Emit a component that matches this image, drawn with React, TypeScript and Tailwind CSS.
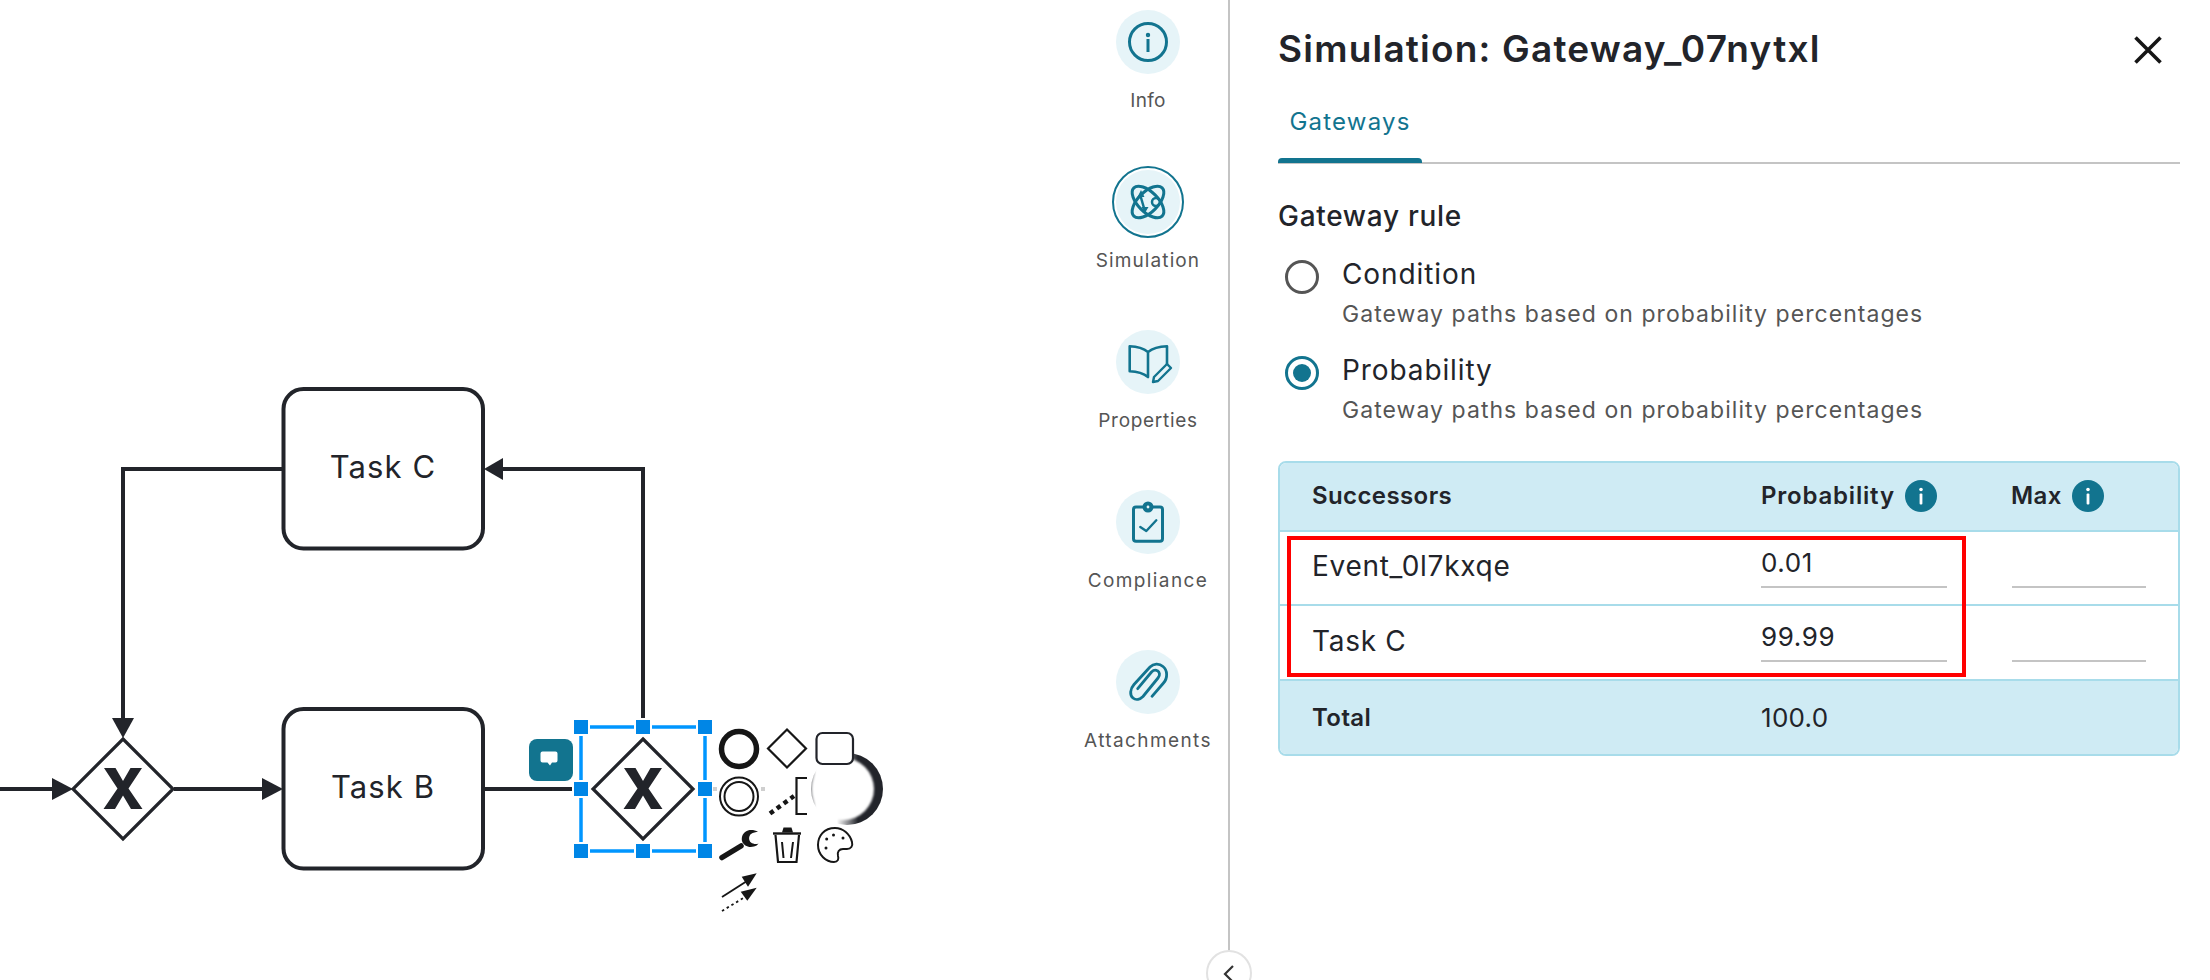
const TEAL = "#12748f";
const INK = "#22242a";

function InfoDot() {
  return (
    <svg width="32" height="32" viewBox="0 0 32 32">
      <circle cx="16" cy="16" r="16" fill={TEAL} />
      <circle cx="16" cy="9.5" r="1.8" fill="#fff" />
      <rect x="14.6" y="13.5" width="2.8" height="11" rx="1" fill="#fff" />
    </svg>
  );
}

function RailIcon({ name }: { name: string }) {
  if (name === "Info") {
    return (
      <g fill="none" stroke={TEAL} strokeWidth="3">
        <circle cx="32" cy="32" r="18.5" />
        <circle cx="32" cy="25" r="1" strokeWidth="2.4" />
        <path d="M32 29v13" />
      </g>
    );
  }
  if (name === "Simulation") {
    return (
      <g fill="none" stroke={TEAL} strokeWidth="3">
        <ellipse cx="32" cy="32" rx="20" ry="10" transform="rotate(45 32 32)" />
        <ellipse cx="32" cy="32" rx="20" ry="10" transform="rotate(-45 32 32)" />
        <circle cx="40" cy="32" r="4" strokeWidth="2.5" />
        <path d="M24.5 26l3.5 12" strokeWidth="2.5" />
        <path d="M25 20l-3.5 7h7z M29 43l3.5-6h-7z" fill={TEAL} stroke="none" />
      </g>
    );
  }
  if (name === "Properties") {
    return (
      <g fill="none" stroke={TEAL} strokeWidth="2.6" strokeLinecap="round" strokeLinejoin="round">
        <path d="M32 22C27 18 20 16.5 13.7 16.3V41.3C20 41.5 27 43 32 47V22C37 18 44 16.5 51 16.3V33.7" />
        <path d="M37 52l1-5 13-13 4 4-13 13z" strokeWidth="2.4" />
      </g>
    );
  }
  if (name === "Compliance") {
    return (
      <g fill="none" stroke={TEAL} strokeWidth="3" strokeLinejoin="round">
        <rect x="17.5" y="17" width="29" height="34.3" rx="2.5" />
        <circle cx="32" cy="17" r="4" fill={TEAL} />
        <circle cx="32" cy="17" r="1.4" fill="#e6f4f8" stroke="none" />
        <path d="M24.3 37l6 4 10-10.7" strokeWidth="2.4" strokeLinecap="round" />
      </g>
    );
  }
  return (
    <path
      d="M36 46.3L47.5 33C52 28 51.5 20 47 16.5C43 13 37.5 13.5 34 17L18 34.5C14 39 13.5 45 17 48C20 50.5 24 49.5 27 46.5L42 28C44.5 25 43.5 22 41.5 20.8C39.5 19.5 37.5 20 35.5 22L21.7 38.7"
      fill="none"
      stroke={TEAL}
      strokeWidth="2.8"
      strokeLinecap="round"
    />
  );
}

const RAIL = [
  { name: "Info", label: "mt-[14px] tracking-[0.3px]" },
  { name: "Simulation", label: "mt-[10px] tracking-[1.1px]" },
  { name: "Properties", label: "mt-[14px] tracking-[0.7px]" },
  { name: "Compliance", label: "mt-[14px] tracking-[1.4px]" },
  { name: "Attachments", label: "mt-[14px] tracking-[1.4px]" },
];

function Gateway({ cx }: { cx: number }) {
  return (
    <g>
      <path d={`M${cx} 739L${cx + 50} 789L${cx} 839L${cx - 50} 789Z`} fill="#fff" stroke={INK} strokeWidth="3.2" />
      <path
        d={`M${cx - 19} 768h11.5l7.5 13l7.5-13h11.5l-13.5 20.5l14 20.5h-11.5l-8-13.5l-8 13.5h-11.5l14-20.5z`}
        fill={INK}
      />
    </g>
  );
}

function Task({ y, label }: { y: number; label: string }) {
  return (
    <g>
      <rect x="283.5" y={y} width="199.5" height="159.5" rx="20" fill="#fff" stroke={INK} strokeWidth="4" />
      <text x="383" y={y + 89} textAnchor="middle" fontSize="31" letterSpacing="1.1" fill={INK} fontFamily="Inter, sans-serif">
        {label}
      </text>
    </g>
  );
}

function Handle({ x, y }: { x: number; y: number }) {
  return <rect x={x - 7} y={y - 7} width="14" height="14" fill="#0086e6" stroke="#fff" strokeWidth="4" paintOrder="stroke" />;
}

function Diagram() {
  return (
    <svg width="1060" height="980" viewBox="0 0 1060 980" className="block">
      <defs>
        <filter id="soft" x="-20%" y="-20%" width="140%" height="140%">
          <feGaussianBlur stdDeviation="1.2" />
        </filter>
        <linearGradient id="crescent" gradientUnits="userSpaceOnUse" x1="811" y1="0" x2="858" y2="0">
          <stop offset="0" stopColor={INK} stopOpacity="0.6" />
          <stop offset="0.12" stopColor={INK} stopOpacity="0" />
          <stop offset="0.55" stopColor={INK} stopOpacity="0" />
          <stop offset="1" stopColor={INK} stopOpacity="1" />
        </linearGradient>
      </defs>
      <g fill="none" stroke={INK} strokeWidth="4">
        <path d="M0 789H55" />
        <path d="M174 789H266" />
        <path d="M283 469H123V722" />
        <path d="M500 469H643V722" />
        <path d="M483 789H572" />
      </g>
      <Gateway cx={123} />
      <Gateway cx={643} />
      <g fill={INK}>
        <path d="M73 789L52 778V800Z" />
        <path d="M283 789L262 778V800Z" />
        <path d="M123 738L112 718H134Z" />
        <path d="M484 469L503 458V480Z" />
      </g>
      <Task y={389} label="Task C" />
      <Task y={709} label="Task B" />

      {/* selection */}
      <rect x="581" y="727" width="124" height="124" fill="none" stroke="#0096ff" strokeWidth="3.5" />
      {[581, 643, 705].map((x) =>
        [727, 789, 851].map((y) => (x === 643 && y === 789 ? null : <Handle key={`${x}-${y}`} x={x} y={y} />)),
      )}
      <rect x="713" y="787" width="4" height="4" fill="#cfcfcf" />
      <rect x="761" y="787" width="4" height="4" fill="#cfcfcf" />

      {/* comment badge */}
      <rect x="529" y="739" width="44" height="42" rx="8" fill={TEAL} />
      <path d="M542.5 751.5h13a2 2 0 0 1 2 2v7a2 2 0 0 1-2 2h-3.5l-2 3l-2.5-3h-5a2 2 0 0 1-2-2v-7a2 2 0 0 1 2-2z" fill="#fff" />

      {/* context pad */}
      <circle cx="847" cy="789" r="36" fill="url(#crescent)" />
      <circle cx="843" cy="789" r="31" fill="#fff" filter="url(#soft)" />
      <rect x="816.5" y="733" width="36.5" height="31" rx="6" fill="#fff" stroke={INK} strokeWidth="2.2" />
      <circle cx="739" cy="749" r="17.5" fill="none" stroke="#161616" strokeWidth="5.5" />
      <path d="M787 729.5L806 748.5L787 767.5L768 748.5Z" fill="none" stroke="#161616" strokeWidth="2.2" />
      <circle cx="739" cy="796.5" r="19" fill="none" stroke="#161616" strokeWidth="2" />
      <circle cx="739" cy="796.5" r="14.5" fill="none" stroke="#161616" strokeWidth="2" />
      <path d="M807 778H796.5V814H807" fill="none" stroke="#161616" strokeWidth="2.2" />
      <path d="M770 813.5L794 796" fill="none" stroke="#161616" strokeWidth="4.5" strokeDasharray="4.5 4" />
      <path d="M722 857.5L741 846" fill="none" stroke="#161616" strokeWidth="5.5" strokeLinecap="round" />
      <path
        d="M758 832C755 830 751 829.5 748 830.5C743 832 741 837 742 841C743.5 846 749 848 754 846.5C756 846 757.5 845 758.5 843.5C756 844.5 753 844 751 842.5C748.5 840.5 748.5 836 751 834C753 832.5 756 832 758 832Z"
        fill="#161616"
      />
      <path d="M782 832.5L783.5 827.5H791.5L793 832.5Z" fill="#161616" />
      <path d="M773 833.5H801" stroke="#161616" strokeWidth="2.4" />
      <path d="M775.5 835L778 862H796.5L799 835" fill="none" stroke="#161616" strokeWidth="2.2" />
      <path d="M782 842L783.5 858M793 842L791 858" stroke="#161616" strokeWidth="2" />
      <path
        d="M835 828C824 828 818 836 818 845C818 855 826 862 834 862C838 862 839 859 838 856C837 852 839 849 843 849L847 849C851 849 853 846 852 842C850 834 843 828 835 828Z"
        fill="#fff"
        stroke="#161616"
        strokeWidth="2"
      />
      <g fill="#161616">
        <circle cx="826.7" cy="839" r="1.5" />
        <circle cx="833.5" cy="835" r="1.5" />
        <circle cx="843" cy="838" r="1.5" />
        <circle cx="826" cy="848" r="1.5" />
      </g>
      <path d="M722 897L747 881" stroke="#161616" strokeWidth="1.8" />
      <path d="M756.7 873.3L741.7 876.7L748 886.7Z" fill="#161616" />
      <path d="M722 911L745 897" stroke="#161616" strokeWidth="1.8" strokeDasharray="2.5 3" />
      <path d="M756.7 887.7L740.7 891.7L747.3 900.7Z" fill="#161616" />
    </svg>
  );
}

function Cell({ value }: { value?: string }) {
  return (
    <input
      readOnly
      value={value ?? ""}
      className="self-start mt-[14px] h-[42px] w-full pb-[7px] border-b-2 border-[#c4c4c4] bg-transparent text-[26px] tracking-[0.6px] text-[#22242a] outline-none"
    />
  );
}

export default function App() {
  return (
    <div className="relative flex h-[980px] w-[2210px] overflow-hidden bg-white text-[#22242a] [font-family:Inter,sans-serif]">
      <div className="w-[1060px] shrink-0">
        <Diagram />
      </div>

      {/* icon rail */}
      <div className="flex w-[168px] shrink-0 flex-col items-center pl-[8px] pt-[10px]">
        {RAIL.map((item) => (
          <div key={item.name} className="flex h-[160px] w-full flex-col items-center">
            <div
              className={
                item.name === "Simulation"
                  ? "h-[72px] w-[72px] -mt-[4px] rounded-full border-2 border-[#12748f] p-[2px]"
                  : "h-[64px] w-[64px] rounded-full"
              }
            >
              <svg width="64" height="64" viewBox="0 0 64 64" className="rounded-full bg-[#e6f4f8]">
                <RailIcon name={item.name} />
              </svg>
            </div>
            <span className={`${item.label} whitespace-nowrap text-[19px] leading-[26px] text-[#555555]`}>{item.name}</span>
          </div>
        ))}
      </div>

      {/* panel */}
      <div className="flex-1 border-l-2 border-[#c4c4c4] pl-[48px] pr-[30px]">
        <div className="flex h-[100px] items-center justify-between pr-[18px]">
          <h1 className="-mt-[2px] text-[37px] font-semibold tracking-[1.2px]">Simulation: Gateway_07nytxl</h1>
          <svg width="28" height="28" viewBox="0 0 28 28" fill="none" stroke="#161616" strokeWidth="3.6">
            <path d="M1.5 1.5L26.5 26.5M26.5 1.5L1.5 26.5" />
          </svg>
        </div>

        <div className="relative h-[64px] border-b-2 border-[#c4c4c4]">
          <div className="w-[144px] pt-[4px] text-center text-[24px] leading-[36px] tracking-[1.2px] text-[#12748f]">Gateways</div>
          <div className="absolute -bottom-[1px] left-0 h-[5px] w-[144px] rounded-t-sm bg-[#12748f]" />
        </div>

        <h2 className="mt-[35px] mb-[1px] text-[28px] font-medium leading-[34px] tracking-[0.7px]">Gateway rule</h2>

        <div className="mt-[22px] flex flex-col gap-[22px]">
          <div className="flex h-[74px] gap-[23px] pl-[7px]">
            <span className="mt-[5px] h-[34px] w-[34px] rounded-full border-[3px] border-[#555555]" />
            <div>
              <div className="text-[28px] leading-[38px] tracking-[0.9px]">Condition</div>
              <div className="mt-[6px] text-[23px] leading-[30px] tracking-[1.05px] text-[#555555]">Gateway paths based on probability percentages</div>
            </div>
          </div>
          <div className="flex h-[74px] gap-[23px] pl-[7px]">
            <span className="mt-[5px] flex h-[34px] w-[34px] items-center justify-center rounded-full border-[3px] border-[#12748f]">
              <span className="h-[18px] w-[18px] rounded-full bg-[#12748f]" />
            </span>
            <div>
              <div className="text-[28px] leading-[38px] tracking-[0.9px]">Probability</div>
              <div className="mt-[6px] text-[23px] leading-[30px] tracking-[1.05px] text-[#555555]">Gateway paths based on probability percentages</div>
            </div>
          </div>
        </div>

        <div className="relative mt-[36px]">
          <div className="overflow-hidden rounded-lg border-2 border-[#a8dcea]">
            <div className="grid h-[69px] grid-cols-[481px_250px_1fr] items-center border-b-2 border-[#a8dcea] bg-[#cfebf4] text-[24px] font-semibold tracking-[0.4px]">
              <div className="-mt-[2px] pl-[32px]">Successors</div>
              <div className="-mt-[2px] flex items-center gap-[10px] tracking-[0.8px]">
                Probability
                <InfoDot />
              </div>
              <div className="-mt-[2px] flex items-center gap-[10px]">
                Max
                <InfoDot />
              </div>
            </div>
            <div className="grid h-[74px] grid-cols-[481px_186px_65px_134px] items-center border-b-2 border-[#a8dcea]">
              <div className="pb-[4px] pl-[32px] text-[28px] tracking-[0.7px]">Event_0l7kxqe</div>
              <Cell value="0.01" />
              <span />
              <Cell />
            </div>
            <div className="grid h-[75px] grid-cols-[481px_186px_65px_134px] items-center border-b-2 border-[#a8dcea]">
              <div className="pb-[4px] pl-[32px] text-[28px] tracking-[0.7px]">Task C</div>
              <Cell value="99.99" />
              <span />
              <Cell />
            </div>
            <div className="grid h-[73px] grid-cols-[481px_1fr] items-center bg-[#cfebf4]">
              <div className="pl-[32px] text-[24px] font-semibold tracking-[0.4px]">Total</div>
              <div className="text-[26px] tracking-[0.3px]">100.0</div>
            </div>
          </div>
          <div className="absolute left-[9px] top-[75px] h-[141px] w-[679px] border-4 border-[#ff0000]" />
        </div>
      </div>

      {/* collapse toggle */}
      <div className="absolute left-[1206px] top-[950px] flex h-[46px] w-[46px] items-start justify-center rounded-full border-2 border-[#e2e2e2] bg-white pt-[12px]">
        <svg width="14" height="20" viewBox="0 0 14 20" fill="none" stroke="#333" strokeWidth="2.2">
          <path d="M11 2L3 10L11 18" />
        </svg>
      </div>
    </div>
  );
}
